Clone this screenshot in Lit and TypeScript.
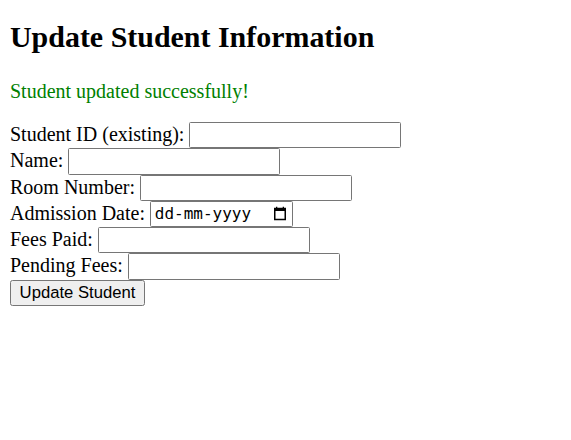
import { LitElement, html, css } from "lit";
import { customElement } from "lit/decorators.js";

@customElement("app-root")
export class AppRoot extends LitElement {
  static styles = css`
    :host { display: block; height: 440px; padding: 0 10px; box-sizing: border-box; background: #fff; overflow: hidden; color: #000; font-family: "Liberation Serif", "Times New Roman", serif; font-size: 20px; line-height: 23px; }
    .title { margin: 0; padding-top: 20px; font-size: 29.95px; line-height: 34px; font-weight: bold; }
    .message { margin: 26px 0 19px; color: #008000; }
    .row { display: flex; align-items: flex-start; height: 26.28px; gap: 4.8px; white-space: nowrap; }
    .label { padding-top: 1px; }
    .field { box-sizing: border-box; width: 212px; height: 26.25px; border: 1px solid #767676; border-radius: 1.5px; padding: 1px 3px; background: #fff; outline: none; font: 16.67px "Liberation Sans", Arial, sans-serif; }
    .date { box-sizing: border-box; display: flex; align-items: center; justify-content: space-between; width: 143px; height: 26px; border: 1px solid #767676; border-radius: 1.5px; padding: 0 5px 0 4px; font: 16px "DejaVu Sans Mono", monospace; }
    .submit { box-sizing: border-box; width: 135px; height: 26px; padding: 0; border: 1px solid #767676; border-radius: 2.5px; background: #efefef; color: #000; font: 16.67px "Liberation Sans", Arial, sans-serif; }
  `;
  render() {
    const text = (label: string) => html`<div class="row"><label class="label">${label}</label><input class="field" aria-label=${label} /></div>`;
    return html`
      <h2 class="title">Update Student Information</h2>
      <p class="message">Student updated successfully!</p>
      <form>
        ${text("Student ID (existing):")}
        ${text("Name:")}
        ${text("Room Number:")}
        <div class="row"><label class="label">Admission Date:</label><div class="date"><span>dd-mm-yyyy</span>
          <svg width="14" height="15" viewBox="0 0 14 15"><path d="M1.75 2.5h10.5v11H1.75z" fill="none" stroke="#000" stroke-width="1.5"/><path d="M1 2h12v3H1zM3 .7h1.3V2H3zM9.7.7H11V2H9.7z"/></svg></div></div>
        ${text("Fees Paid:")}
        ${text("Pending Fees:")}
        <button class="submit" type="button">Update Student</button>
      </form>`;
  }
}
